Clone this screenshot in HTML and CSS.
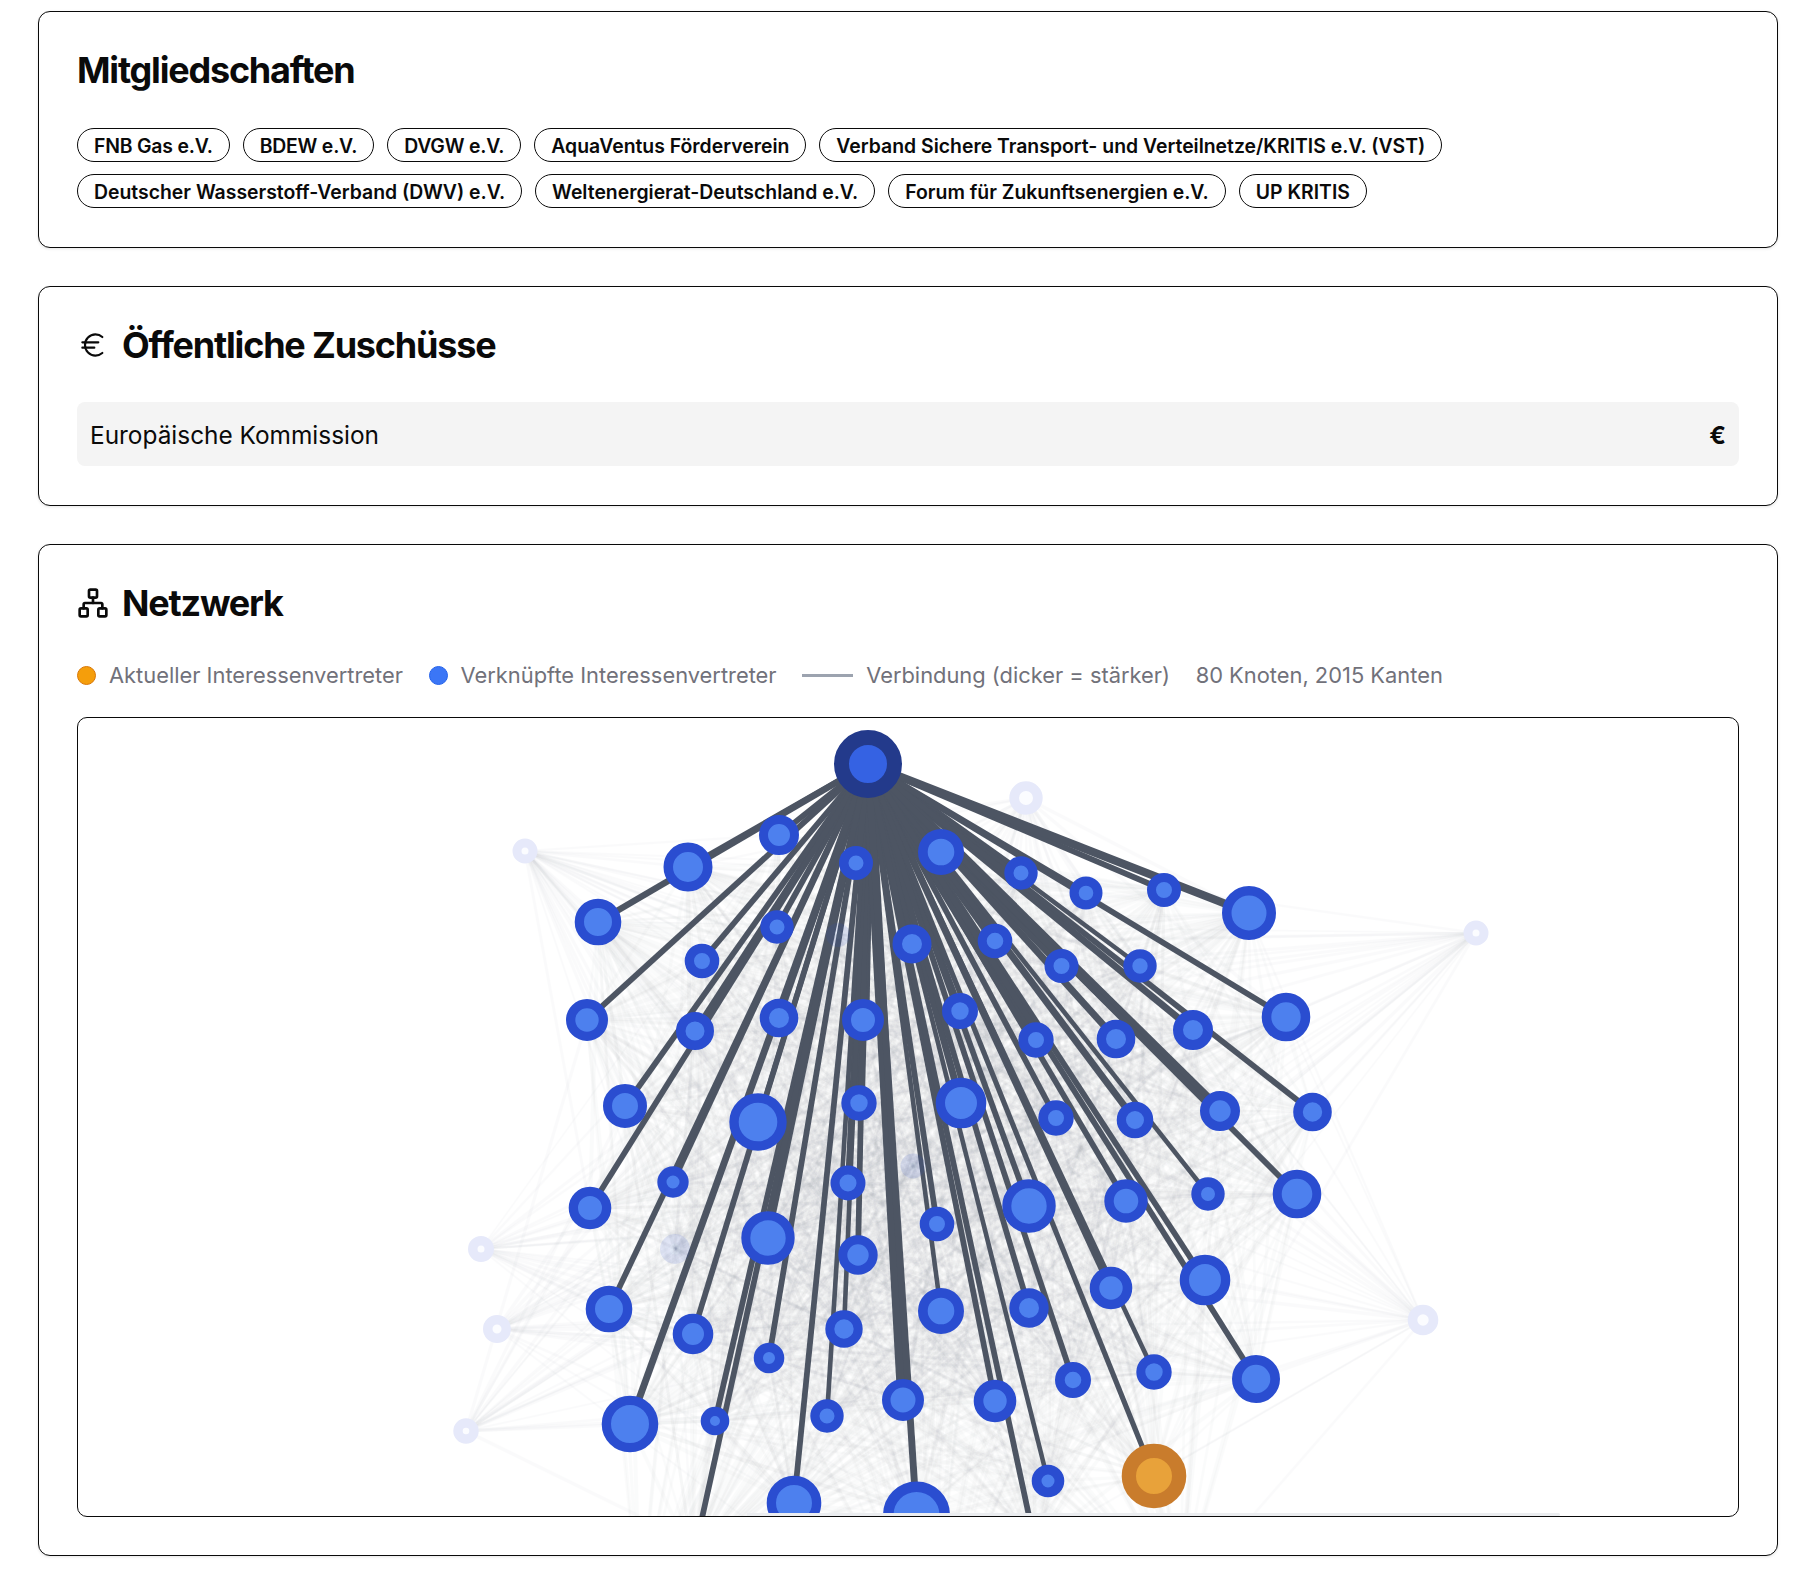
FILE: index.html
```html
<!DOCTYPE html>
<html lang="de">
<head>
  <meta charset="UTF-8" />
  <title>Interessenvertreter</title>
  <link rel="stylesheet" href="styles.css">
</head>
<body>
  <section class="card">
    <h2 class="card-title">Mitgliedschaften</h2>
    <div class="chips">
      <span class="chip chip-tight">FNB Gas e.V.</span>
      <span class="chip chip-tight">BDEW e.V.</span>
      <span class="chip chip-tight">DVGW e.V.</span>
      <span class="chip">AquaVentus Förderverein</span>
      <span class="chip">Verband Sichere Transport- und Verteilnetze/KRITIS e.V. (VST)</span>
      <span class="chip">Deutscher Wasserstoff-Verband (DWV) e.V.</span>
      <span class="chip">Weltenergierat-Deutschland e.V.</span>
      <span class="chip">Forum für Zukunftsenergien e.V.</span>
      <span class="chip">UP KRITIS</span>
    </div>
  </section>

  <section class="card">
    <h2 class="card-title">
      <svg class="title-icon icon-thin" viewBox="0 0 24 24">
        <path d="M4 10h12"/>
        <path d="M4 14h9"/>
        <path d="M19 6a7.7 7.7 0 0 0-5.2-2A7.9 7.9 0 0 0 6 12c0 4.4 3.5 8 7.8 8 2 0 3.8-.8 5.2-2"/>
      </svg>
      Öffentliche Zuschüsse
    </h2>
    <div class="grant-row">
      <span>Europäische Kommission</span>
      <span class="grant-sum">€</span>
    </div>
  </section>

  <section class="card">
    <h2 class="card-title">
      <svg class="title-icon" viewBox="0 0 24 24">
        <rect x="16" y="16" width="6" height="6" rx="1"/>
        <rect x="2" y="16" width="6" height="6" rx="1"/>
        <rect x="9" y="2" width="6" height="6" rx="1"/>
        <path d="M5 16v-3a1 1 0 0 1 1-1h12a1 1 0 0 1 1 1v3"/>
        <path d="M12 12V8"/>
      </svg>
      Netzwerk
    </h2>
    <div class="legend">
      <span class="legend-item"><i class="dot dot-current"></i>Aktueller Interessenvertreter</span>
      <span class="legend-item"><i class="dot dot-linked"></i>Verknüpfte Interessenvertreter</span>
      <span class="legend-item"><i class="line-sample"></i>Verbindung (dicker = stärker)</span>
      <span class="legend-item">80 Knoten, 2015 Kanten</span>
    </div>
    <div class="graph-box">
      <svg id="graph" class="graph" viewBox="78 719 1660 798"></svg>
      <div class="graph-scrollbar"></div>
    </div>
  </section>

  <script src="graph.js"></script>
</body>
</html>
```

FILE: styles.css
```css
* {
  margin: 0;
  padding: 0;
  box-sizing: border-box;
}

body {
  font-family: Inter, "Liberation Sans", sans-serif;
  background-color: #fff;
  color: #0a0a0a;
  padding: 11px 38px 18px;
  display: flex;
  flex-direction: column;
  gap: 38px;
}

.card {
  background-color: #fff;
  border: 1px solid #0a0a0a;
  border-radius: 12px;
  padding: 38px;
  box-shadow: 0 1px 3px rgba(0, 0, 0, 0.1);
}

.card-title {
  display: flex;
  align-items: center;
  gap: 13px;
  font-size: 36px;
  line-height: 40px;
  font-weight: 700;
  letter-spacing: -1.2px;
  margin-bottom: 38px;
}

.title-icon {
  width: 32px;
  height: 32px;
  fill: none;
  stroke: currentColor;
  stroke-width: 2;
  stroke-linecap: round;
  stroke-linejoin: round;
  flex-shrink: 0;
}

.icon-thin {
  stroke-width: 1.6;
}

.chips {
  display: flex;
  flex-wrap: wrap;
  gap: 12px 13px;
  padding-bottom: 1px;
}

.chip {
  border: 1px solid #0a0a0a;
  border-radius: 999px;
  padding: 5px 16px 3px;
  font-size: 19.4px;
  line-height: 24px;
  font-weight: 600;
}

.chip-tight {
  letter-spacing: -0.2px;
}

.grant-row {
  display: flex;
  justify-content: space-between;
  align-items: center;
  height: 64px;
  margin: -1px 0 1px;
  padding: 2px 13px 0;
  background-color: #f4f4f4;
  border-radius: 8px;
  font-size: 24.4px;
}

.grant-sum {
  font-weight: 700;
}

.legend {
  display: flex;
  align-items: center;
  gap: 25.6px;
  height: 28px;
  margin: 1px 0 28px;
  color: #71717a;
  font-size: 21.87px;
  line-height: 28px;
}

.legend-item {
  display: flex;
  align-items: center;
  gap: 13px;
}

.dot {
  width: 19px;
  height: 19px;
  border-radius: 50%;
}

.dot-current {
  background-color: #f59e0b;
  border: 1px solid #d97706;
}

.dot-linked {
  background-color: #3b76f6;
  border: 1px solid #2563eb;
}

.line-sample {
  width: 51px;
  height: 3px;
  background-color: #9ca3af;
}

.graph-box {
  position: relative;
  height: 800px;
  border: 1px solid #0a0a0a;
  border-radius: 10px;
  overflow: hidden;
}

.graph {
  display: block;
  width: 100%;
  height: 100%;
}

.graph-scrollbar {
  position: absolute;
  left: 669px;
  right: 178px;
  bottom: 0;
  height: 3px;
  background-color: #ebedf0;
  border-radius: 0 3px 3px 0;
}

.node-core {
  fill: #4d80ee;
  stroke: #2a4dd0;
}

.node-root {
  fill: #3562e3;
  stroke: #233a8b;
}

.node-current {
  fill: #e8a23a;
  stroke: #c97c2c;
}

.node-faint {
  opacity: 0.12;
}

.node-faint-solid {
  fill: #fbfcff;
  stroke: #e6e9fa;
}

.edge-strong {
  stroke: #4d5563;
}

.edge-mesh {
  stroke: #6b7280;
  opacity: 0.024;
}

.edge-mesh-faint {
  stroke: #8b92a0;
  opacity: 0.035;
}
```

FILE: graph.js
```js
// x, y, outer radius, inner radius, width of the edge to the root
const root = [868, 765, 34, 19];
const current = [1154, 1477, 32.3, 18, 4.5];

const linked = [
  [688, 868, 24.5, 15, 5], [598, 923, 23.3, 14, 5.5], [779, 836, 20, 11, 5],
  [856, 864, 17, 7.5, 9], [941, 853, 23, 13.3, 11], [1021, 874, 16.7, 7.5, 7],
  [1086, 894, 16.5, 7.3, 5], [1164, 891, 17, 8, 5], [1249, 914, 27, 17.5, 7],
  [777, 928, 16.7, 7.5, 5], [702, 962, 17.3, 8, 5], [912, 945, 19.5, 10, 9],
  [995, 942, 17.3, 8.3, 8], [1061.5, 967, 17, 8, 7], [1140, 967, 16.7, 7.7, 4],
  [587, 1021, 21, 11.7, 5], [695, 1032, 19, 9.5, 5], [779, 1019, 19.3, 10, 5],
  [863, 1021, 21, 12, 11], [960, 1012, 18, 8.7, 6], [1036, 1041, 17.7, 8, 10],
  [1116, 1040, 19.3, 10, 6], [1193, 1031, 20, 10, 6], [1286, 1018, 24.3, 14.7, 5],
  [625, 1107, 22, 13, 5], [758, 1123, 28.7, 19.3, 4.5], [859, 1104, 17.7, 8.7, 10],
  [961, 1104, 25.3, 16, 6], [1056, 1119, 17.7, 8, 5], [1135, 1121, 18.3, 9, 6],
  [1220, 1112, 20, 10.7, 9], [1312.5, 1113, 19.3, 9.7, 5], [673, 1183, 15.7, 6.5, 5],
  [590, 1209, 21.3, 12, 5], [848, 1184, 17.5, 8.5, 5], [937, 1225, 17.3, 8, 5],
  [768, 1239, 26.7, 17.7, 5], [858, 1256, 19.7, 10.7, 5], [609, 1310, 23.3, 14, 5],
  [693, 1335, 20.3, 11, 5], [769, 1359, 15.3, 6, 5], [844, 1330, 18.7, 9.7, 4],
  [630, 1425, 28.3, 19, 6], [715, 1422, 14.3, 5, 5], [827, 1417, 16.7, 7.5, 4],
  [903, 1401, 21, 12.5, 10], [1029, 1207, 26.7, 17.7, 5], [1126, 1202, 21.7, 12.3, 5],
  [1208, 1195, 16.7, 7, 4], [1297, 1195, 24.3, 15.3, 5], [941, 1312, 23, 13.3, 4],
  [1029, 1309, 19.7, 10, 5], [1111, 1289, 21.3, 11.7, 6], [1205, 1281, 25.3, 16, 5],
  [995, 1402, 21.3, 11.7, 5], [1073, 1381, 18, 8.3, 5], [1154, 1373, 17.7, 8.7, 4],
  [1256, 1380, 24, 14.3, 5], [1048, 1482, 16.3, 6.5, 4], [794, 1504, 27.3, 18, 5],
  [916.5, 1516, 33.5, 23, 6]
];

// outliers sit on white, these sit inside the mesh and let it show through
const faintSolid = [
  [525, 852, 12.5, 3.5], [1026, 799, 16.7, 7], [1476, 934, 12.5, 3.5],
  [481, 1250, 13, 3.5], [497, 1330, 14, 4.5], [466, 1432, 12.7, 3.3],
  [1423, 1321, 15.3, 5.7]
];
const faintInside = [[838, 936, 12, 4], [913, 1167, 12.5, 4], [675, 1250, 15, 5.5]];
const faint = faintSolid.concat(faintInside);

// below the fold of the box, only their edges show
const hidden = [
  [693, 1560, 20, 10, 5], [1035, 1545, 20, 10, 5], [1180, 1600, 20, 10, 0],
  [640, 1620, 20, 10, 0], [930, 1660, 20, 10, 0]
];

const EDGE_SCALE = 1.15;
const SVG_NS = 'http://www.w3.org/2000/svg';
const svg = document.getElementById('graph');

let seed = 20150;
function rand() {
  seed = (seed * 1664525 + 1013904223) % 4294967296;
  return seed / 4294967296;
}

function addEdge(a, b, width, cls) {
  const line = document.createElementNS(SVG_NS, 'line');
  line.setAttribute('x1', a[0]);
  line.setAttribute('y1', a[1]);
  line.setAttribute('x2', b[0]);
  line.setAttribute('y2', b[1]);
  line.setAttribute('stroke-width', width);
  line.setAttribute('class', cls);
  svg.appendChild(line);
}

function addNode(n, cls) {
  const circle = document.createElementNS(SVG_NS, 'circle');
  circle.setAttribute('cx', n[0]);
  circle.setAttribute('cy', n[1]);
  circle.setAttribute('r', (n[2] + n[3]) / 2);
  circle.setAttribute('stroke-width', n[2] - n[3]);
  circle.setAttribute('class', cls);
  svg.appendChild(circle);
}

const strong = linked.concat([current], hidden);

// weak mesh between all the other nodes
for (let i = 0; i < strong.length; i++) {
  for (let j = i + 1; j < strong.length; j++) {
    if (rand() < 0.64) {
      addEdge(strong[i], strong[j], 2 + rand() * 2, 'edge-mesh');
    }
  }
}
faint.forEach(function (f) {
  strong.forEach(function (n) {
    if (rand() < 0.45) {
      addEdge(f, n, 1.5 + rand() * 2, 'edge-mesh-faint');
    }
  });
});

strong.forEach(function (n) {
  if (n[4] > 0) {
    addEdge(root, n, n[4] * EDGE_SCALE, 'edge-strong');
  }
});

faintSolid.forEach(function (n) {
  addNode(n, 'node-faint-solid');
});
faintInside.forEach(function (n) {
  addNode(n, 'node-core node-faint');
});
linked.forEach(function (n) {
  addNode(n, 'node-core');
});
addNode(root, 'node-root');
addNode(current, 'node-current');
```
